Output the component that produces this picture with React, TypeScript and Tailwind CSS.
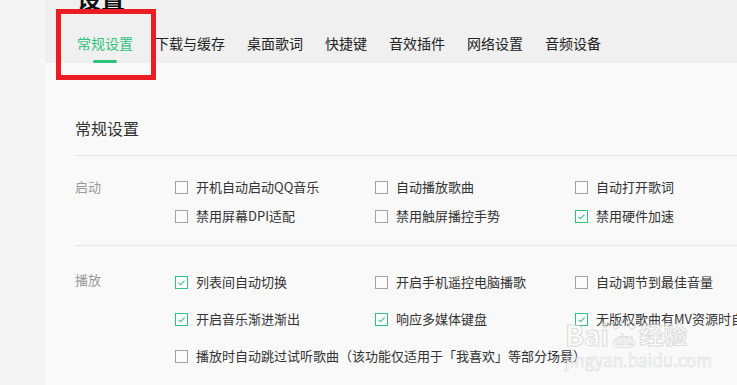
import React from "react";

const GREEN = "#31c27c";

function Box({ checked }: { checked: boolean }) {
  return checked ? (
    <span className="w-[13px] h-[13px] border border-[#31c27c] flex items-center justify-center shrink-0 bg-white">
      <svg width="9" height="9" viewBox="0 0 9 9">
        <path d="M1.5 4.8 L3.6 6.6 L7.5 2.6" fill="none" stroke={GREEN} strokeWidth="1.1" />
      </svg>
    </span>
  ) : (
    <span className="w-[13px] h-[13px] border border-[#a3a3a3] shrink-0 bg-[#fbfbfb]" />
  );
}

function Item({ label, checked = false, wide = false }: { label: string; checked?: boolean; wide?: boolean }) {
  return (
    <div className={`flex items-center gap-[8px] h-[20px] whitespace-nowrap ${wide ? "" : "w-[200px] shrink-0"}`}>
      <Box checked={checked} />
      <span className="text-[13px] text-[#333] leading-[20px]">{label}</span>
    </div>
  );
}

const tabs = ["常规设置", "下载与缓存", "桌面歌词", "快捷键", "音效插件", "网络设置", "音频设备"];

export default function App() {
  return (
    <div
      className="w-[737px] h-[385px] overflow-hidden flex bg-[#f9f9f9] relative"
      style={{ fontFamily: '"Noto Sans CJK SC", "Noto Sans", sans-serif' }}
    >
      <div className="w-[45px] shrink-0 bg-[#f5f5f5]" />
      <div className="flex-1 flex flex-col min-w-0">
        <div className="h-[63px] bg-[#f0f0f0] pl-[32px] flex flex-col shrink-0 overflow-hidden">
          <div className="text-[24px] font-bold leading-[24px] mt-[-14px] text-[#111] h-[24px]">设置</div>
          <div className="flex gap-[22px] mt-[23px]">
            {tabs.map((t, i) => (
              <div key={t} className="flex flex-col items-center">
                <span className={`text-[14px] leading-[20px] whitespace-nowrap ${i === 0 ? "text-[#31c27c]" : "text-[#222]"}`}>{t}</span>
                <span className={`mt-[7px] h-[3px] w-[24px] rounded-full ${i === 0 ? "bg-[#31c27c]" : "bg-transparent"}`} />
              </div>
            ))}
          </div>
        </div>
        <div className="pl-[30px] flex flex-col overflow-hidden">
          <div className="pt-[53px] text-[16px] leading-[24px] text-[#333]">常规设置</div>
          <div className="mt-[15px] h-px bg-[#e6e6e6] w-[700px]" />
          <div className="flex pt-[21px] pb-[19px]">
            <div className="w-[100px] shrink-0 text-[13px] leading-[20px] text-[#999]">启动</div>
            <div className="flex flex-col gap-[9px]">
              <div className="flex">
                <Item label="开机自动启动QQ音乐" />
                <Item label="自动播放歌曲" />
                <Item label="自动打开歌词" />
              </div>
              <div className="flex">
                <Item label="禁用屏幕DPI适配" />
                <Item label="禁用触屏播控手势" />
                <Item label="禁用硬件加速" checked />
              </div>
            </div>
          </div>
          <div className="h-px bg-[#e6e6e6] w-[700px]" />
          <div className="flex pt-[26px]">
            <div className="w-[100px] shrink-0 text-[13px] leading-[16px] text-[#999]">播放</div>
            <div className="flex flex-col gap-[17px]">
              <div className="flex">
                <Item label="列表间自动切换" checked />
                <Item label="开启手机遥控电脑播歌" />
                <Item label="自动调节到最佳音量" />
              </div>
              <div className="flex">
                <Item label="开启音乐渐进渐出" checked />
                <Item label="响应多媒体键盘" checked />
                <Item label="无版权歌曲有MV资源时自动播放MV" checked />
              </div>
              <div className="flex">
                <Item label="播放时自动跳过试听歌曲（该功能仅适用于「我喜欢」等部分场景）" wide />
              </div>
            </div>
          </div>
        </div>
      </div>
      <div className="absolute left-[56px] top-[9px] w-[100px] h-[71px] border-[5px] border-[#ec1c24]" />
      <div className="absolute left-[565px] top-[318px] flex flex-col pointer-events-none opacity-80">
        <div className="flex items-center h-[32px]">
          <span className="text-[28px] leading-[32px] font-bold text-white/60 [-webkit-text-stroke:1px_#d6d6d6] whitespace-nowrap">Bai</span>
          <span className="relative w-[30px] h-[32px] flex items-end justify-center">
            <svg className="absolute left-0 top-0" width="30" height="32" viewBox="0 0 30 32">
              <g fill="none" stroke="#d6d6d6" strokeWidth="1">
                <ellipse cx="7" cy="7" rx="3" ry="4" />
                <ellipse cx="15" cy="4.5" rx="3" ry="4" />
                <ellipse cx="23" cy="7" rx="3" ry="4" />
                <path d="M4 26 C4 16 26 16 26 26 C26 31 4 31 4 26 Z" />
              </g>
            </svg>
            <span className="relative text-[14px] leading-[16px] mb-[3px] font-bold text-white/60 [-webkit-text-stroke:0.8px_#d6d6d6]">du</span>
          </span>
          <span className="text-[24px] leading-[32px] font-bold text-white/60 [-webkit-text-stroke:1px_#d6d6d6] whitespace-nowrap">经验</span>
        </div>
        <span className="text-[17px] leading-[20px] text-white/60 [-webkit-text-stroke:0.6px_#d6d6d6] whitespace-nowrap">jingyan.baidu.com</span>
      </div>
    </div>
  );
}
